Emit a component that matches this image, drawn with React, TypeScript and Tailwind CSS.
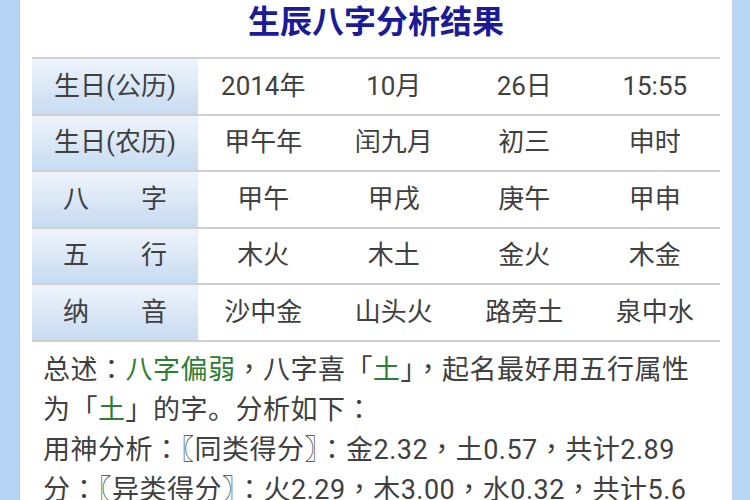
import React from 'react';

// 八字排盘数据
const ROWS = [
  { label: '生日(公历)', spaced: false, cells: ['2014年', '10月', '26日', '15:55'] },
  { label: '生日(农历)', spaced: false, cells: ['甲午年', '闰九月', '初三', '申时'] },
  { label: ['八', '字'], spaced: true, cells: ['甲午', '甲戌', '庚午', '甲申'] },
  { label: ['五', '行'], spaced: true, cells: ['木火', '木土', '金火', '木金'] },
  { label: ['纳', '音'], spaced: true, cells: ['沙中金', '山头火', '路旁土', '泉中水'] },
];

const FONT = "font-['Roboto','Noto_Sans_CJK_SC',sans-serif]";

// 全角标点居中显示
function P({ c }: { c: string }) {
  return <span className="font-['Noto_Sans_CJK_TC',sans-serif]">{c}</span>;
}

function G({ children }: { children: React.ReactNode }) {
  return <span className="text-[#2f7d32]">{children}</span>;
}

export default function App() {
  return (
    <div className={`${FONT} flex h-[500px] w-[750px] overflow-hidden bg-[#b7d4f4]`}>
      {/* left strip */}
      <div className="w-[20px] shrink-0 border-r border-[#a9c8ea] bg-[#b6d4f4]" />

      {/* main panel */}
      <div className="flex w-[712px] shrink-0 flex-col bg-white px-[12px]">
        <h1 className="h-[44px] text-center text-[32px] font-bold leading-[44px] text-[#1b1b98]">
          生辰八字分析结果
        </h1>

        {/* table */}
        <div className="mt-[13px] border-t-2 border-[#d2d2d2]">
          {ROWS.map((row, i) => (
            <div key={i} className="flex h-[56.5px] border-b-2 border-[#d0d0d0] text-[26px] text-[#404040]">
              <div className="flex w-[166px] shrink-0 items-center justify-center bg-gradient-to-b from-[#eef4fb] to-[#c7dbf1]">
                {row.spaced && Array.isArray(row.label) ? (
                  <div className="flex w-[104px] justify-between">
                    <span>{row.label[0]}</span>
                    <span>{row.label[1]}</span>
                  </div>
                ) : (
                  <span>{row.label}</span>
                )}
              </div>
              <div className="grid flex-1 grid-cols-4">
                {row.cells.map((c, j) => (
                  <div key={j} className="flex items-center justify-center">
                    {c}
                  </div>
                ))}
              </div>
            </div>
          ))}
        </div>

        {/* summary */}
        <div className="mt-[6px] pl-[11px] text-[27px] leading-[40px] tracking-[0.5px] text-[#404040] whitespace-nowrap">
          <p className="h-[40px]">
            总述<P c="：" /><G>八字偏弱</G><P c="，" />八字喜<P c="「" /><G>土</G><P c="」" /><P c="，" />起名最好用五行属性
          </p>
          <p className="h-[40px]">
            为<P c="「" /><G>土</G><P c="」" />的字。分析如下<P c="：" />
          </p>
          <p className="h-[40px]">
            用神分析<P c="：" /><P c="〖" />同类得分<P c="〗" /><P c="：" />金2.32<P c="，" />土0.57<P c="，" />共计2.89
          </p>
          <p className="h-[40px]">
            分<P c="：" /><P c="〖" />异类得分<P c="〗" /><P c="：" />火2.29<P c="，" />木3.00<P c="，" />水0.32<P c="，" />共计5.6
          </p>
        </div>
      </div>

      {/* right strip */}
      <div className="flex-1 border-l border-[#c4dcf5] bg-[#b9d5f4]" />
    </div>
  );
}
